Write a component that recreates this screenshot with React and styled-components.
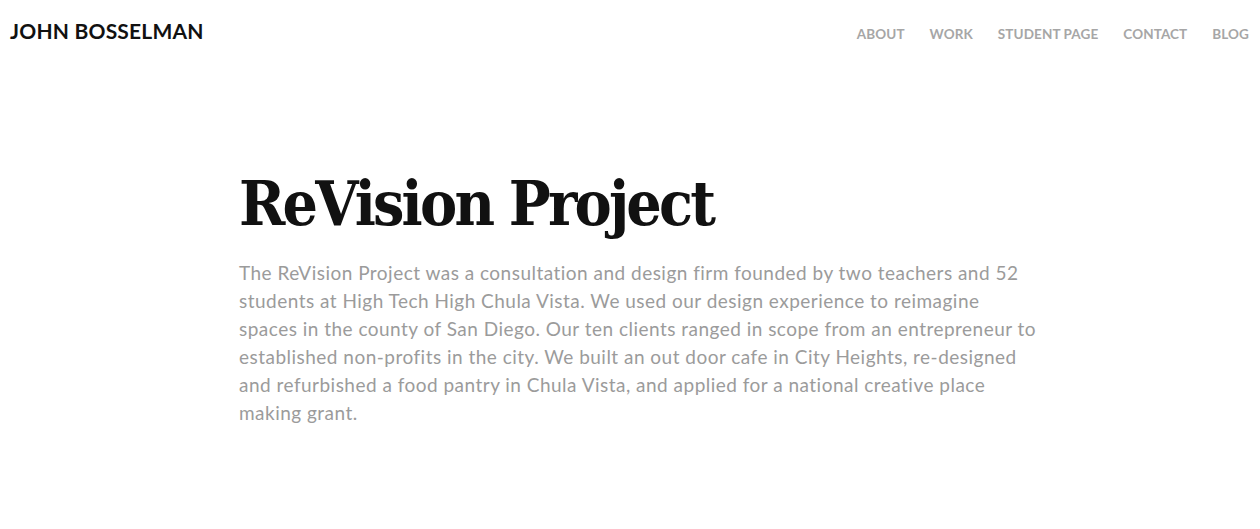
import React from "react";
import styled, { createGlobalStyle } from "styled-components";

const Global = createGlobalStyle`
  html, body { margin: 0; padding: 0; background: #fff; }
  body { font-family: Lato, "Open Sans", sans-serif; }
`;

const Page = styled.div`
  width: 1260px;
  min-height: 529px;
  background: #fff;
`;

const Header = styled.header`
  display: flex;
  justify-content: space-between;
  align-items: flex-start;
  padding: 19px 11px 0 10px;
`;

const Logo = styled.div`
  font-family: Lato, sans-serif;
  font-size: 21px;
  font-weight: 700;
  color: #111;
  letter-spacing: 0.2px;
  line-height: 24px;
`;

const Nav = styled.nav`
  display: flex;
  gap: 25px;
  padding-top: 7px;
`;

const NavLink = styled.a`
  font-family: Lato, sans-serif;
  font-size: 13.5px;
  font-weight: 700;
  color: #a6a6a6;
  text-decoration: none;
  line-height: 16px;
  letter-spacing: 0.1px;
`;

const Main = styled.main`
  width: 840px;
  margin: 0 0 0 239px;
  padding: 121px 0 0 0;
`;

const Title = styled.h1`
  margin: 0 0 15px;
  font-family: "DejaVu Serif Condensed", "DejaVu Serif", serif;
  font-weight: 700;
  font-size: 62px;
  line-height: 80px;
  color: #111;
  letter-spacing: -2.8px;
`;

const Body = styled.p`
  margin: 0;
  font-family: Lato, sans-serif;
  font-size: 19px;
  line-height: 28px;
  letter-spacing: 0.48px;
  color: #9b9b9b;
`;

const lines = [
  "The ReVision Project was a consultation and design firm founded by two teachers and 52",
  "students at High Tech High Chula Vista. We used our design experience to reimagine",
  "spaces in the county of San Diego. Our ten clients ranged in scope from an entrepreneur to",
  "established non-profits in the city. We built an out door cafe in City Heights, re-designed",
  "and refurbished a food pantry in Chula Vista, and applied for a national creative place",
  "making grant.",
];

export default function App() {
  const links = ["ABOUT", "WORK", "STUDENT PAGE", "CONTACT", "BLOG"];
  return (
    <Page>
      <Global />
      <Header>
        <Logo>JOHN BOSSELMAN</Logo>
        <Nav>
          {links.map((l) => (
            <NavLink key={l} href="#">{l}</NavLink>
          ))}
        </Nav>
      </Header>
      <Main>
        <Title>ReVision Project</Title>
        <Body>
          {lines.map((l, i) => (
            <React.Fragment key={i}>
              {l}
              {i < lines.length - 1 && <br />}
            </React.Fragment>
          ))}
        </Body>
      </Main>
    </Page>
  );
}
